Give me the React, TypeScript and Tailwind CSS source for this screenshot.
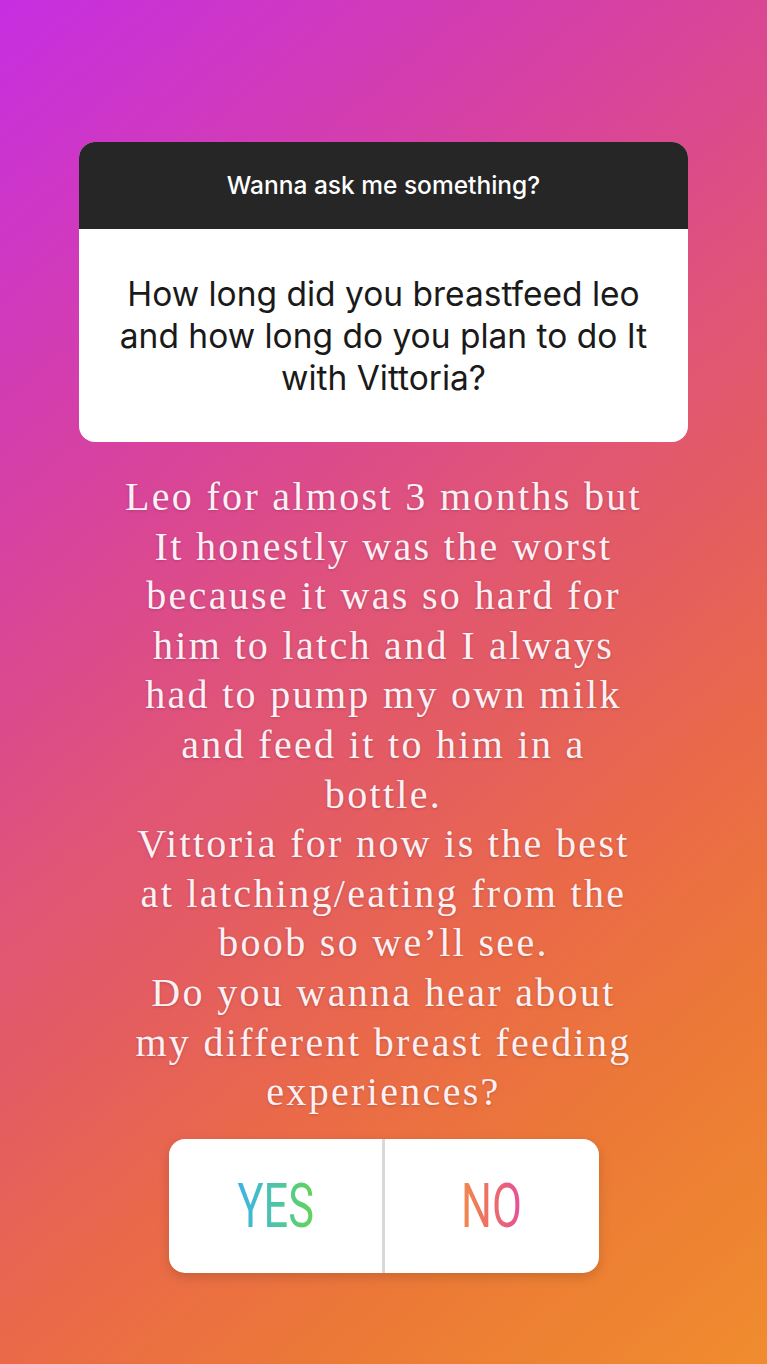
import React from "react";

const bodyLines = [
  "Leo for almost 3 months but",
  "It honestly was the worst",
  "because it was so hard for",
  "him to latch and I always",
  "had to pump my own milk",
  "and feed it to him in a",
  "bottle.",
  "Vittoria for now is the best",
  "at latching/eating from the",
  "boob so we\u2019ll see.",
  "Do you wanna hear about",
  "my different breast feeding",
  "experiences?",
];

export default function App() {
  return (
    <div className="w-[767px] h-[1364px] overflow-hidden bg-[linear-gradient(140deg,#c72ee2_0%,#d8449a_30%,#e05478_45%,#e45c62_55%,#ea6a48_68%,#ec7a36_82%,#f08c2e_100%)] flex flex-col items-center pt-[142px]">
      <div className="w-[609px] rounded-[16px] overflow-hidden bg-white">
        <div className="h-[87px] bg-[#262626] flex items-center justify-center">
          <span className="text-white text-[24.5px] font-medium font-['Inter',sans-serif]">
            Wanna ask me something?
          </span>
        </div>
        <div className="h-[213px] flex items-center justify-center px-2">
          <p className="text-[#1a1a1a] text-[33.5px] leading-[42px] text-center font-['Inter',sans-serif] whitespace-nowrap">
            How long did you breastfeed leo
            <br />
            and how long do you plan to do It
            <br />
            with Vittoria?
          </p>
        </div>
      </div>

      <div className="mt-[30px] text-center font-['Liberation_Serif',serif] text-[40px] leading-[49.6px] tracking-[0.058em] text-[#fdf0f4] [text-shadow:0_1px_3px_rgba(0,0,0,0.18)]">
        {bodyLines.map((l, i) => (
          <div key={i} className="whitespace-nowrap">
            {l}
          </div>
        ))}
      </div>

      <div className="mt-[22px] w-[430px] h-[134px] rounded-[16px] bg-white flex shadow-[0_4px_12px_rgba(0,0,0,0.15)] overflow-hidden">
        <div className="flex-1 flex items-center justify-center">
          <span className="inline-block scale-x-[0.7] text-[62px] font-normal leading-none font-['Roboto',sans-serif] bg-[linear-gradient(90deg,#3bb3e8,#4cc5a8_50%,#63d358)] bg-clip-text text-transparent">
            YES
          </span>
        </div>
        <div className="w-[3px] bg-[#d8d8d8]" />
        <div className="flex-1 flex items-center justify-center">
          <span className="inline-block scale-x-[0.7] text-[62px] font-normal leading-none font-['Roboto',sans-serif] bg-[linear-gradient(90deg,#f08a4c,#ec6a6c_55%,#e4509a)] bg-clip-text text-transparent">
            NO
          </span>
        </div>
      </div>
    </div>
  );
}
